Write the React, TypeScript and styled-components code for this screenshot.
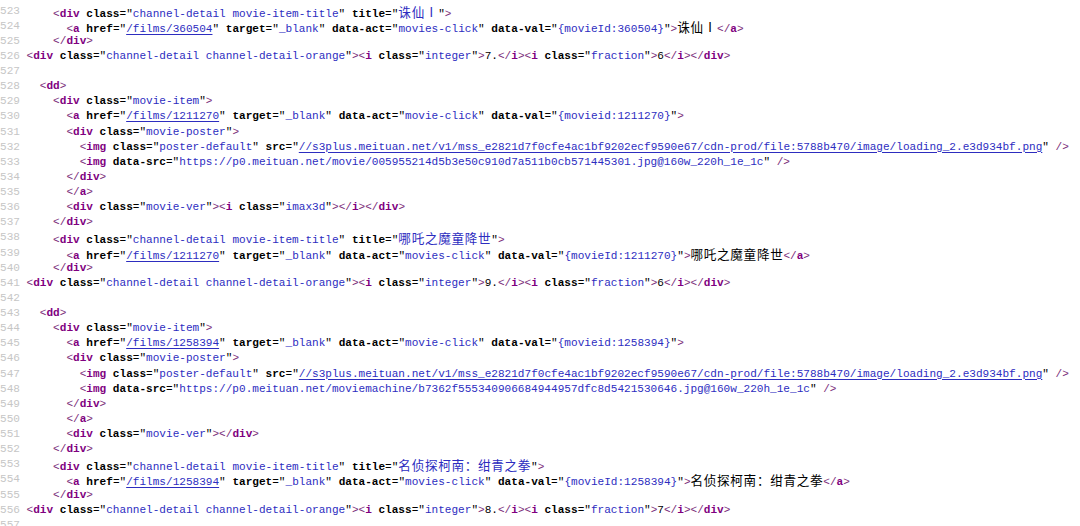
import React from 'react';
import styled, { createGlobalStyle } from 'styled-components';

const Global = createGlobalStyle`
  html, body { margin: 0; padding: 0; background: #ffffff; }
  body { overflow: hidden; }
`;

const Source = styled.pre`
  margin: 0;
  padding-top: 3.5px;
  font-family: "Liberation Mono", "DejaVu Sans Mono", monospace;
  font-size: 11.07px;
  line-height: 15.13px;
  color: #000000;
  white-space: pre;
`;

const Row = styled.div`
  display: grid;
  grid-template-columns: 4ch 1fr;
  height: 15.13px;
`;

const LineNo = styled.span`
  color: #c6c6c6;
`;

const Code = styled.span`
  display: block;
`;

const Punct = styled.span`
  color: #7a2c7a;
`;

const TagName = styled.span`
  color: #800080;
  font-weight: bold;
`;

const AttrName = styled.span`
  color: #000000;
  font-weight: bold;
`;

const Value = styled.span<{ $link?: boolean }>`
  color: #2d2dbf;
  text-decoration: ${(p) => (p.$link ? 'underline' : 'none')};
  text-underline-offset: 2px;
`;

const Cjk = styled.span`
  font-family: "Noto Sans CJK SC", "Noto Sans CJK TC", sans-serif;
  font-size: 12.6px;
  letter-spacing: 0.68px;
`;

type Tok = { k: 'p' | 'tag' | 'attr' | 'val' | 'link' | 'text'; s: string };

function tokenize(src: string): Tok[] {
  const out: Tok[] = [];
  let i = 0;
  while (i < src.length) {
    if (src[i] === '<') {
      let j = i + 1;
      if (src[j] === '/') j++;
      out.push({ k: 'p', s: src.slice(i, j) });
      let m = j;
      while (m < src.length && /[a-z0-9]/i.test(src[m])) m++;
      out.push({ k: 'tag', s: src.slice(j, m) });
      i = m;
      while (i < src.length && src[i] !== '>') {
        if (src.startsWith('/>', i)) break;
        if (src[i] === ' ') {
          out.push({ k: 'text', s: ' ' });
          i++;
          continue;
        }
        const e = src.indexOf('=', i);
        const name = src.slice(i, e);
        out.push({ k: 'attr', s: name });
        out.push({ k: 'text', s: '="' });
        const vs = e + 2;
        const ve = src.indexOf('"', vs);
        out.push({ k: name === 'href' || name === 'src' ? 'link' : 'val', s: src.slice(vs, ve) });
        out.push({ k: 'text', s: '"' });
        i = ve + 1;
      }
      if (src.startsWith('/>', i)) {
        out.push({ k: 'p', s: '/>' });
        i += 2;
      } else {
        out.push({ k: 'p', s: '>' });
        i++;
      }
    } else {
      let j = src.indexOf('<', i);
      if (j < 0) j = src.length;
      out.push({ k: 'text', s: src.slice(i, j) });
      i = j;
    }
  }
  return out;
}

const CJK_RE = /([\u2000-\u2fff\u3000-\u9fff\uff00-\uffef]+)/;

function renderText(s: string, key: string) {
  return s.split(CJK_RE).map((part, idx) =>
    idx % 2 === 1 ? <Cjk key={key + '-' + idx}>{part}</Cjk> : part
  );
}

function renderTok(t: Tok, i: number) {
  const key = 't' + i;
  switch (t.k) {
    case 'p':
      return <Punct key={key}>{t.s}</Punct>;
    case 'tag':
      return <TagName key={key}>{t.s}</TagName>;
    case 'attr':
      return <AttrName key={key}>{t.s}</AttrName>;
    case 'val':
      return <Value key={key}>{renderText(t.s, key)}</Value>;
    case 'link':
      return <Value key={key} $link>{t.s}</Value>;
    default:
      return <React.Fragment key={key}>{renderText(t.s, key)}</React.Fragment>;
  }
}

const POSTER =
  '<img class="poster-default" src="//s3plus.meituan.net/v1/mss_e2821d7f0cfe4ac1bf9202ecf9590e67/cdn-prod/file:5788b470/image/loading_2.e3d934bf.png" />';

const LINES: [number, string][] = [
  [4, '<div class="channel-detail movie-item-title" title="诛仙Ⅰ">'],
  [6, '<a href="/films/360504" target="_blank" data-act="movies-click" data-val="{movieId:360504}">诛仙Ⅰ</a>'],
  [4, '</div>'],
  [0, '<div class="channel-detail channel-detail-orange"><i class="integer">7.</i><i class="fraction">6</i></div>'],
  [0, ''],
  [2, '<dd>'],
  [4, '<div class="movie-item">'],
  [6, '<a href="/films/1211270" target="_blank" data-act="movie-click" data-val="{movieid:1211270}">'],
  [6, '<div class="movie-poster">'],
  [8, POSTER],
  [8, '<img data-src="https://p0.meituan.net/movie/005955214d5b3e50c910d7a511b0cb571445301.jpg@160w_220h_1e_1c" />'],
  [6, '</div>'],
  [6, '</a>'],
  [6, '<div class="movie-ver"><i class="imax3d"></i></div>'],
  [4, '</div>'],
  [4, '<div class="channel-detail movie-item-title" title="哪吒之魔童降世">'],
  [6, '<a href="/films/1211270" target="_blank" data-act="movies-click" data-val="{movieId:1211270}">哪吒之魔童降世</a>'],
  [4, '</div>'],
  [0, '<div class="channel-detail channel-detail-orange"><i class="integer">9.</i><i class="fraction">6</i></div>'],
  [0, ''],
  [2, '<dd>'],
  [4, '<div class="movie-item">'],
  [6, '<a href="/films/1258394" target="_blank" data-act="movie-click" data-val="{movieid:1258394}">'],
  [6, '<div class="movie-poster">'],
  [8, POSTER],
  [8, '<img data-src="https://p0.meituan.net/moviemachine/b7362f555340906684944957dfc8d5421530646.jpg@160w_220h_1e_1c" />'],
  [6, '</div>'],
  [6, '</a>'],
  [6, '<div class="movie-ver"></div>'],
  [4, '</div>'],
  [4, '<div class="channel-detail movie-item-title" title="名侦探柯南：绀青之拳">'],
  [6, '<a href="/films/1258394" target="_blank" data-act="movies-click" data-val="{movieId:1258394}">名侦探柯南：绀青之拳</a>'],
  [4, '</div>'],
  [0, '<div class="channel-detail channel-detail-orange"><i class="integer">8.</i><i class="fraction">7</i></div>'],
  [0, ''],
];

export default function App() {
  return (
    <>
      <Global />
      <Source>
        {LINES.map(([indent, src], idx) => (
          <Row key={idx}>
            <LineNo>{523 + idx}</LineNo>
            <Code>
              {' '.repeat(indent)}
              {tokenize(src).map(renderTok)}
            </Code>
          </Row>
        ))}
      </Source>
    </>
  );
}
